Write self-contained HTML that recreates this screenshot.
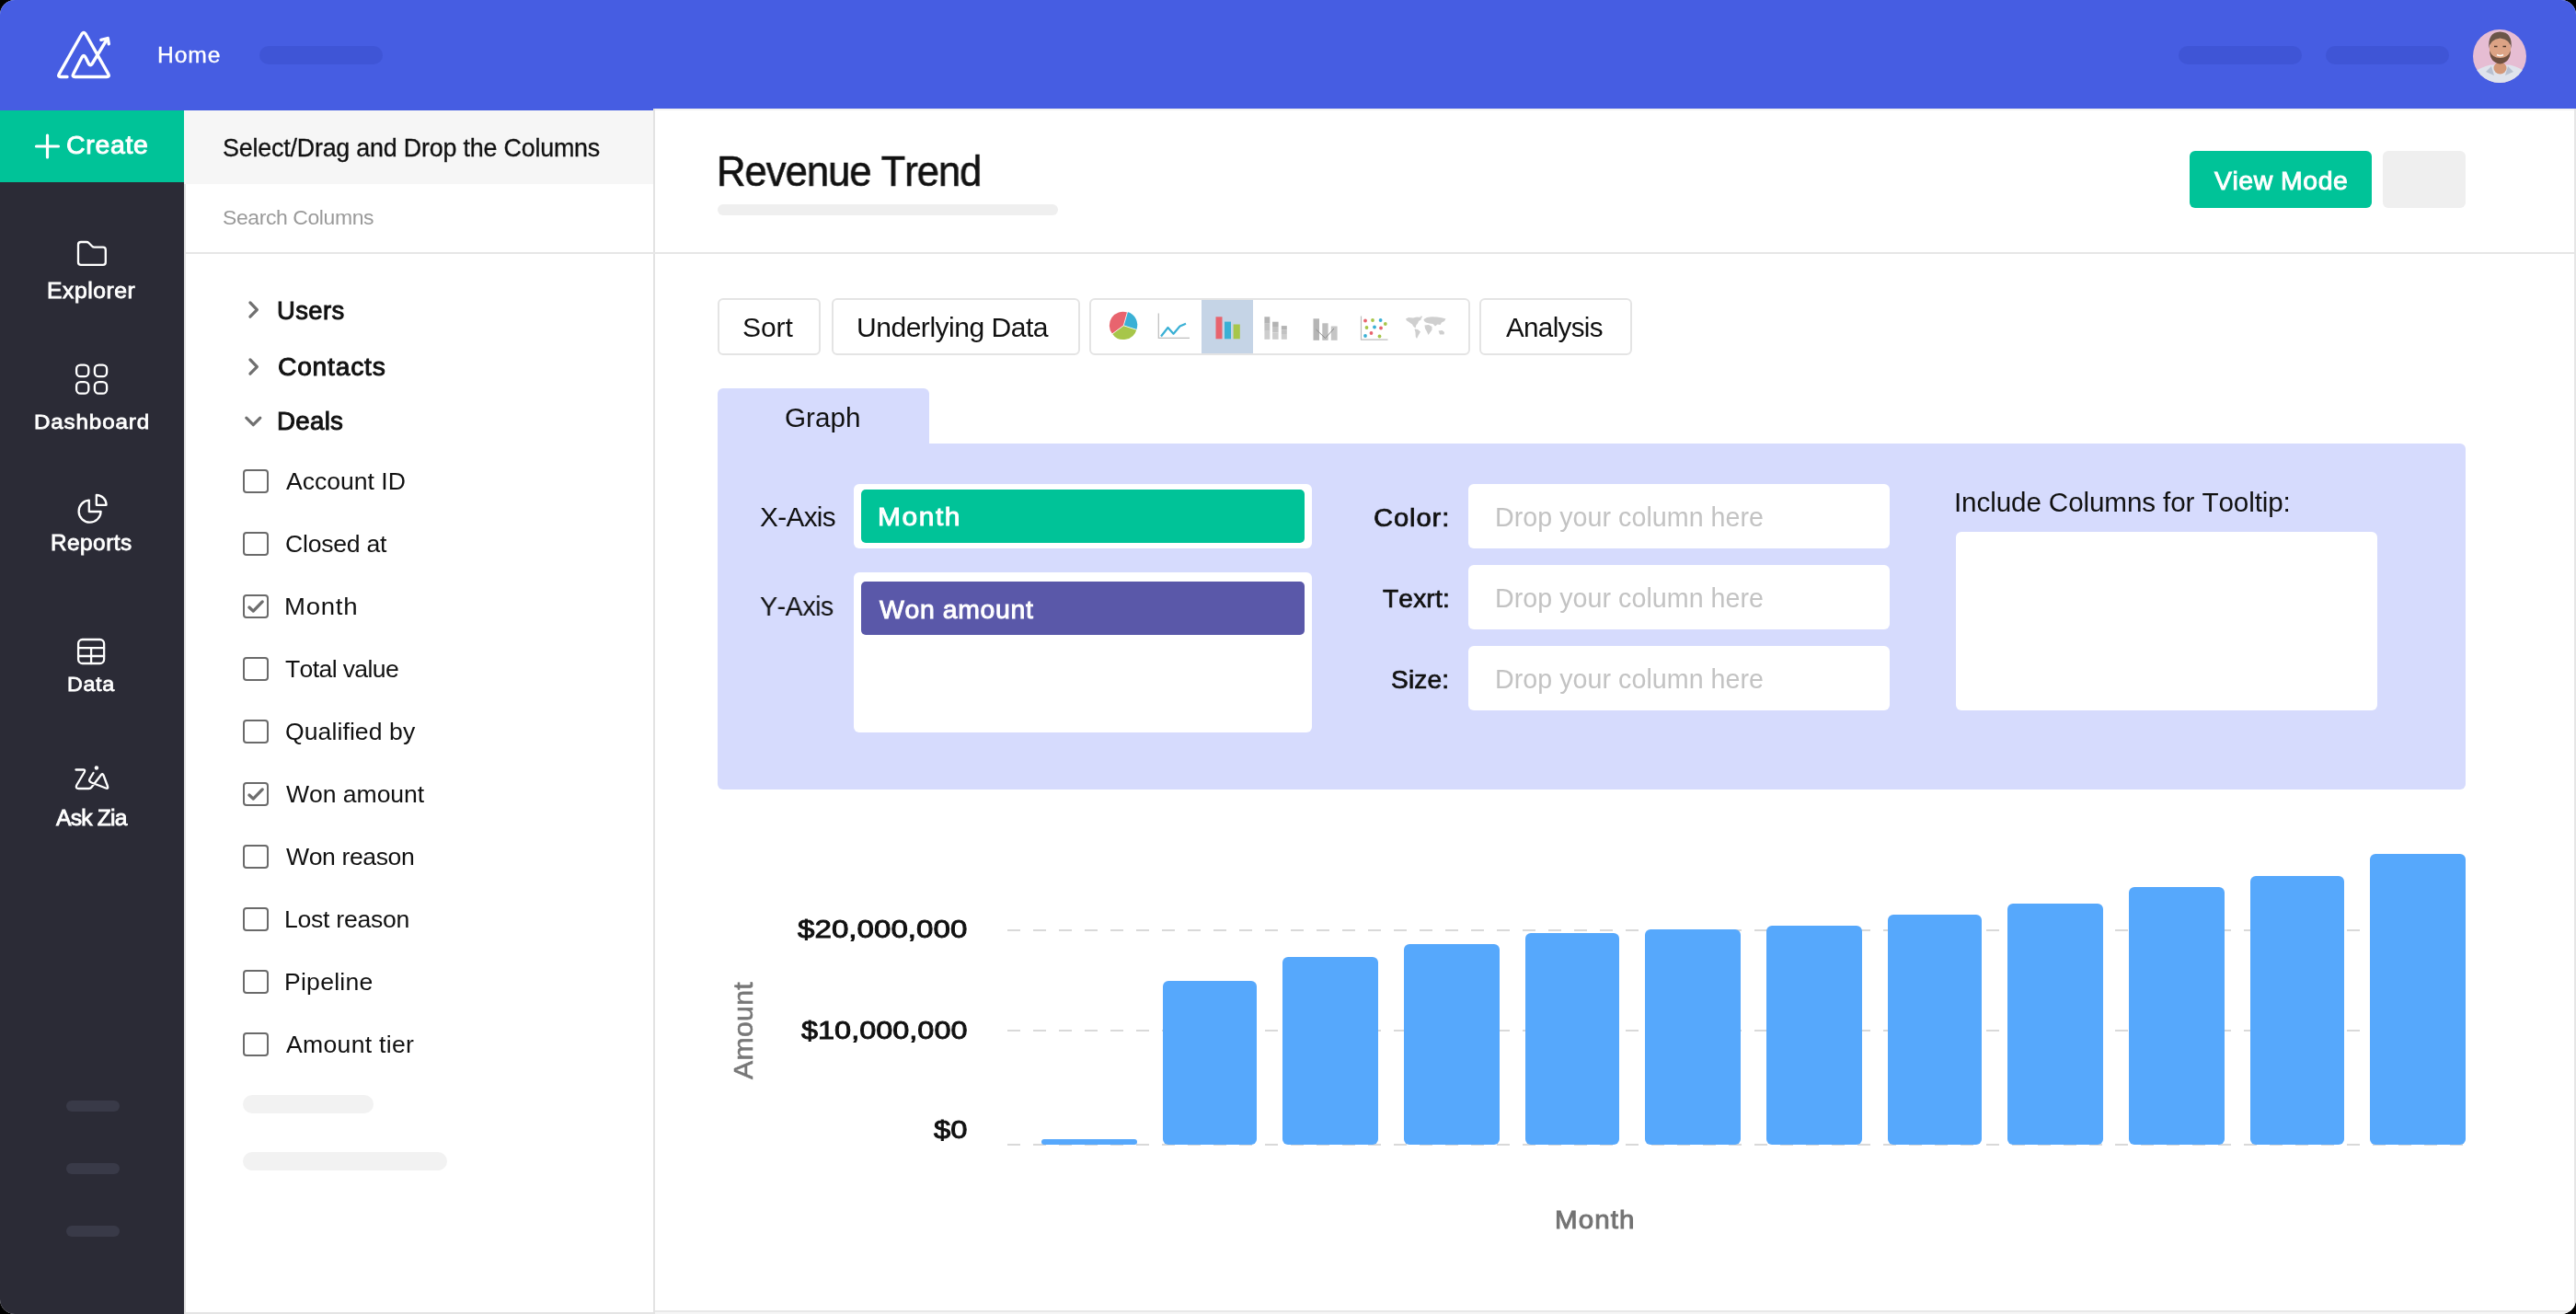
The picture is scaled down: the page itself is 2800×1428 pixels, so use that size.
<!DOCTYPE html>
<html><head><meta charset="utf-8"><title>Revenue Trend</title>
<style>
html,body{margin:0;padding:0;background:#000;}
#app{position:relative;width:2800px;height:1428px;overflow:hidden;border-radius:16px;background:#fff;font-family:"Liberation Sans",sans-serif;}
.r{position:absolute;box-sizing:content-box;}
.t{position:absolute;white-space:nowrap;font-family:"Liberation Sans",sans-serif;font-kerning:none;will-change:transform;}
</style></head><body><div id="app">
<div class="r" style="left:0.0px;top:0.0px;width:2800.0px;height:120.0px;background:#465de2;"></div>
<div class="r" style="left:282.0px;top:50.0px;width:134.0px;height:20.0px;background:#3f55d6;border-radius:10px;"></div>
<div class="r" style="left:2368.0px;top:50.0px;width:134.0px;height:20.0px;background:#3f55d6;border-radius:10px;"></div>
<div class="r" style="left:2528.0px;top:50.0px;width:134.0px;height:20.0px;background:#3f55d6;border-radius:10px;"></div>
<div class="r" style="left:0.0px;top:120.0px;width:200.0px;height:1308.0px;background:#2b2b36;"></div>
<div class="r" style="left:0.0px;top:120.0px;width:200.0px;height:78.0px;background:#00c398;"></div>
<div class="r" style="left:72.0px;top:1196.0px;width:58.0px;height:12.0px;background:#393a48;border-radius:6px;"></div>
<div class="r" style="left:72.0px;top:1264.0px;width:58.0px;height:12.0px;background:#393a48;border-radius:6px;"></div>
<div class="r" style="left:72.0px;top:1332.0px;width:58.0px;height:12.0px;background:#393a48;border-radius:6px;"></div>
<div class="r" style="left:200.0px;top:120.0px;width:512.0px;height:1308.0px;background:#fff;"></div>
<div class="r" style="left:200.0px;top:120.0px;width:510.0px;height:80.0px;background:#f6f6f6;"></div>
<div class="r" style="left:200.0px;top:200.0px;width:2.0px;height:1228.0px;background:#e3e3e3;"></div>
<div class="r" style="left:710.0px;top:118.0px;width:2.0px;height:1310.0px;background:#e3e3e3;"></div>
<div class="r" style="left:712.0px;top:118.0px;width:2086.0px;height:1306.0px;background:#fff;"></div>
<div class="r" style="left:2798.0px;top:118.0px;width:2.0px;height:1310.0px;background:#e6e6e6;"></div>
<div class="r" style="left:712.0px;top:1424.0px;width:2088.0px;height:2.0px;background:#e8e8e8;"></div>
<div class="r" style="left:712.0px;top:1426.0px;width:2088.0px;height:2.0px;background:#f5f5f5;"></div>
<div class="r" style="left:202.0px;top:274.0px;width:2596.0px;height:2.0px;background:#e6e6e6;"></div>
<div class="r" style="left:712.0px;top:118.0px;width:2086.0px;height:2.0px;background:#f2f2f2;"></div>
<div class="r" style="left:202.0px;top:1426.0px;width:508.0px;height:2.0px;background:#e4e4e4;"></div>
<div class="r" style="left:264.0px;top:1190.0px;width:142.0px;height:20.0px;background:#f2f2f2;border-radius:10px;"></div>
<div class="r" style="left:264.0px;top:1252.0px;width:222.0px;height:20.0px;background:#f2f2f2;border-radius:10px;"></div>
<div class="r" style="left:264px;top:510px;width:24px;height:22px;border:2px solid #6a6a6a;border-radius:4px;"></div>
<div class="r" style="left:264px;top:578px;width:24px;height:22px;border:2px solid #6a6a6a;border-radius:4px;"></div>
<div class="r" style="left:264px;top:646px;width:24px;height:22px;border:2px solid #6a6a6a;border-radius:4px;"></div>
<div class="r" style="left:264px;top:714px;width:24px;height:22px;border:2px solid #6a6a6a;border-radius:4px;"></div>
<div class="r" style="left:264px;top:782px;width:24px;height:22px;border:2px solid #6a6a6a;border-radius:4px;"></div>
<div class="r" style="left:264px;top:850px;width:24px;height:22px;border:2px solid #6a6a6a;border-radius:4px;"></div>
<div class="r" style="left:264px;top:918px;width:24px;height:22px;border:2px solid #6a6a6a;border-radius:4px;"></div>
<div class="r" style="left:264px;top:986px;width:24px;height:22px;border:2px solid #6a6a6a;border-radius:4px;"></div>
<div class="r" style="left:264px;top:1054px;width:24px;height:22px;border:2px solid #6a6a6a;border-radius:4px;"></div>
<div class="r" style="left:264px;top:1122px;width:24px;height:22px;border:2px solid #6a6a6a;border-radius:4px;"></div>
<div class="r" style="left:780.0px;top:222.0px;width:370.0px;height:12.0px;background:#efefef;border-radius:6px;"></div>
<div class="r" style="left:2380.0px;top:164.0px;width:198.0px;height:62.0px;background:#00c398;border-radius:6px;"></div>
<div class="r" style="left:2590.0px;top:164.0px;width:90.0px;height:62.0px;background:#efefef;border-radius:6px;"></div>
<div class="r" style="left:780.0px;top:324.0px;width:112.0px;height:62.0px;border:2px solid #e4e4e4;border-radius:6px;box-sizing:border-box;background:#fff"></div>
<div class="r" style="left:904.0px;top:324.0px;width:270.0px;height:62.0px;border:2px solid #e4e4e4;border-radius:6px;box-sizing:border-box;background:#fff"></div>
<div class="r" style="left:1184.0px;top:324.0px;width:414.0px;height:62.0px;border:2px solid #e4e4e4;border-radius:6px;box-sizing:border-box;background:#fff"></div>
<div class="r" style="left:1608.0px;top:324.0px;width:166.0px;height:62.0px;border:2px solid #e4e4e4;border-radius:6px;box-sizing:border-box;background:#fff"></div>
<div class="r" style="left:1306.0px;top:326.0px;width:56.0px;height:58.0px;background:#c5d4e6;"></div>
<div class="r" style="left:780.0px;top:422.0px;width:230.0px;height:62.0px;background:#d6dbfd;border-radius:6px 6px 0 0;"></div>
<div class="r" style="left:780.0px;top:482.0px;width:1900.0px;height:376.0px;background:#d6dbfd;border-radius:0 6px 6px 6px;"></div>
<div class="r" style="left:928.0px;top:526.0px;width:498.0px;height:70.0px;background:#fff;border-radius:6px;"></div>
<div class="r" style="left:936.0px;top:532.0px;width:482.0px;height:58.0px;background:#00c398;border-radius:5px;"></div>
<div class="r" style="left:928.0px;top:622.0px;width:498.0px;height:174.0px;background:#fff;border-radius:6px;"></div>
<div class="r" style="left:936.0px;top:632.0px;width:482.0px;height:58.0px;background:#5a58a9;border-radius:5px;"></div>
<div class="r" style="left:1596.0px;top:526.0px;width:458.0px;height:70.0px;background:#fff;border-radius:6px;"></div>
<div class="r" style="left:1596.0px;top:614.0px;width:458.0px;height:70.0px;background:#fff;border-radius:6px;"></div>
<div class="r" style="left:1596.0px;top:702.0px;width:458.0px;height:70.0px;background:#fff;border-radius:6px;"></div>
<div class="r" style="left:2126.0px;top:578.0px;width:458.0px;height:194.0px;background:#fff;border-radius:6px;"></div>
<div class="r" style="left:1095px;top:1010px;width:1585px;height:2px;background:repeating-linear-gradient(90deg,#d9d9d9 0 14px,transparent 14px 28px);"></div>
<div class="r" style="left:1095px;top:1119px;width:1585px;height:2px;background:repeating-linear-gradient(90deg,#d9d9d9 0 14px,transparent 14px 28px);"></div>
<div class="r" style="left:1095px;top:1243px;width:1585px;height:2px;background:repeating-linear-gradient(90deg,#d9d9d9 0 14px,transparent 14px 28px);"></div>
<div class="r" style="left:1132.0px;top:1238.0px;width:104.0px;height:6.0px;background:#56a8fc;border-radius:3px;"></div>
<div class="r" style="left:1264.0px;top:1066.0px;width:102.0px;height:178.0px;background:#56a8fc;border-radius:6px;"></div>
<div class="r" style="left:1394.0px;top:1040.0px;width:104.0px;height:204.0px;background:#56a8fc;border-radius:6px;"></div>
<div class="r" style="left:1526.0px;top:1026.0px;width:104.0px;height:218.0px;background:#56a8fc;border-radius:6px;"></div>
<div class="r" style="left:1658.0px;top:1014.0px;width:102.0px;height:230.0px;background:#56a8fc;border-radius:6px;"></div>
<div class="r" style="left:1788.0px;top:1010.0px;width:104.0px;height:234.0px;background:#56a8fc;border-radius:6px;"></div>
<div class="r" style="left:1920.0px;top:1006.0px;width:104.0px;height:238.0px;background:#56a8fc;border-radius:6px;"></div>
<div class="r" style="left:2052.0px;top:994.0px;width:102.0px;height:250.0px;background:#56a8fc;border-radius:6px;"></div>
<div class="r" style="left:2182.0px;top:982.0px;width:104.0px;height:262.0px;background:#56a8fc;border-radius:6px;"></div>
<div class="r" style="left:2314.0px;top:964.0px;width:104.0px;height:280.0px;background:#56a8fc;border-radius:6px;"></div>
<div class="r" style="left:2446.0px;top:952.0px;width:102.0px;height:292.0px;background:#56a8fc;border-radius:6px;"></div>
<div class="r" style="left:2576.0px;top:928.0px;width:104.0px;height:316.0px;background:#56a8fc;border-radius:6px;"></div>
<svg class="r" style="left:0;top:0" width="2800" height="1428" viewBox="0 0 2800 1428"><path d="M73 83.5H66Q62.5 83.5 64.3 80.3L88.3 38Q91 32.8 93.7 38L117.7 80.3Q119.5 83.5 116 83.5H81.5Q78 83.5 79.8 80.3L88.9 62.5Q91 58.4 93.1 62.5L96.5 69.5Q98.3 72.2 100 69.5L116.5 42.3" fill="none" stroke="#fff" stroke-width="3.4" stroke-linecap="round" stroke-linejoin="round"/><path d="M109.8 43.3L117.2 41.6L118.3 47.9" fill="none" stroke="#fff" stroke-width="3.4" stroke-linecap="round" stroke-linejoin="round"/><path d="M39.5 159H63.5M51.5 147V171" stroke="#fff" stroke-width="3.2" stroke-linecap="round"/><path d="M85 266Q85 263 88 263H94Q95.5 263 96.5 264L100 267.5Q101 268.7 102.5 268.7H112Q114.8 268.7 114.8 271.5V285Q114.8 287.8 112 287.8H88Q85 287.8 85 285Z" fill="none" stroke="#fff" stroke-width="2.3" stroke-linecap="round" stroke-linejoin="round"/><rect x="83.1" y="396.6" width="13.2" height="12.6" rx="4.5" fill="none" stroke="#fff" stroke-width="2.3" stroke-linecap="round" stroke-linejoin="round"/><rect x="83.1" y="415.1" width="13.2" height="12.6" rx="4.5" fill="none" stroke="#fff" stroke-width="2.3" stroke-linecap="round" stroke-linejoin="round"/><rect x="102.9" y="396.6" width="13.2" height="12.6" rx="4.5" fill="none" stroke="#fff" stroke-width="2.3" stroke-linecap="round" stroke-linejoin="round"/><rect x="102.9" y="415.1" width="13.2" height="12.6" rx="4.5" fill="none" stroke="#fff" stroke-width="2.3" stroke-linecap="round" stroke-linejoin="round"/><path d="M96.8 543.7A12 12 0 1 0 109.6 556H96.8Z" fill="none" stroke="#fff" stroke-width="2.3" stroke-linecap="round" stroke-linejoin="round"/><path d="M104.8 548.8V538A10.8 10.8 0 0 1 115.6 548.8Z" fill="none" stroke="#fff" stroke-width="2.3" stroke-linecap="round" stroke-linejoin="round"/><rect x="85.1" y="695" width="28" height="26" rx="4.5" fill="none" stroke="#fff" stroke-width="2.3" stroke-linecap="round" stroke-linejoin="round"/><path d="M85.1 704.2H113.1M85.1 713H113.1M99.1 704.2V721" fill="none" stroke="#fff" stroke-width="2.3" stroke-linecap="round" stroke-linejoin="round"/><path d="M82.5 836.5H90.5Q93 836.5 91.8 839L83.2 853.5Q81.8 857 85.5 857H96.5Q98.5 857 99.5 855.5L110 842Q111.5 840 112.5 842.5L117 854.5Q118 857.5 115 856.5L99.5 850.5Q96 849 97.5 846.5L101.5 840" fill="none" stroke="#fff" stroke-width="2.3" stroke-linecap="round" stroke-linejoin="round"/><circle cx="104.9" cy="834.5" r="2.2" fill="#fff"/><path d="M271.9 328.9L279.4 336.6L271.9 344.2" fill="none" stroke="#707070" stroke-width="3.2" stroke-linecap="round" stroke-linejoin="round"/><path d="M271.9 390.9L279.4 398.6L271.9 406.2" fill="none" stroke="#707070" stroke-width="3.2" stroke-linecap="round" stroke-linejoin="round"/><path d="M267.8 454.2L275.3 461.7L282.8 454.2" fill="none" stroke="#707070" stroke-width="3.2" stroke-linecap="round" stroke-linejoin="round"/><path d="M270.9 660.0L275.3 664.1L285.2 653.9" fill="none" stroke="#6e6e6e" stroke-width="3.3" stroke-linecap="round" stroke-linejoin="round"/><path d="M270.9 864.0L275.3 868.1L285.2 857.9" fill="none" stroke="#6e6e6e" stroke-width="3.3" stroke-linecap="round" stroke-linejoin="round"/><path d="M1221.3 353.8L1225.5 339A14.8 14.8 0 0 1 1235.4 358.3Z" fill="#3ab0d5"/><path d="M1221.3 353.8L1235.4 358.3A14.8 14.8 0 0 1 1209 362.7Z" fill="#a7c64a"/><path d="M1221.3 353.8L1209 362.7A14.8 14.8 0 0 1 1225.3 339.5Z" fill="#e8646e"/><path d="M1221.3 353.8L1225.5 339M1221.3 353.8L1235.8 358.5M1221.3 353.8L1208.8 363" stroke="#fff" stroke-width="0.8"/><path d="M1259.3 340.5V367.3H1293" fill="none" stroke="#bdbdbd" stroke-width="1.2"/><path d="M1262 365.5L1269.5 356L1275.5 362.8L1282.5 354.5L1289 351.8" fill="none" stroke="#3ab0d5" stroke-width="2.2" stroke-linejoin="round"/><rect x="1321.5" y="344.3" width="7" height="24" fill="#e8646e"/><rect x="1331" y="349.6" width="7" height="18.7" fill="#3ab0d5"/><rect x="1340.6" y="352.5" width="7.2" height="15.8" fill="#a7c64a"/><rect x="1374.4" y="344.3" width="5.9" height="7.4" fill="#b3b3b3"/><rect x="1374.4" y="351.7" width="5.9" height="8.1" fill="#c2c2c2"/><rect x="1374.4" y="359.8" width="5.9" height="9.0" fill="#cdcdcd"/><rect x="1383.1" y="349.7" width="6.5" height="5.3" fill="#b3b3b3"/><rect x="1383.1" y="355.0" width="6.5" height="6.5" fill="#c2c2c2"/><rect x="1383.1" y="361.5" width="6.5" height="7.3" fill="#cdcdcd"/><rect x="1392.8" y="354.1" width="6.0" height="4.1" fill="#b3b3b3"/><rect x="1392.8" y="358.2" width="6.0" height="4.8" fill="#c2c2c2"/><rect x="1392.8" y="363.0" width="6.0" height="5.8" fill="#cdcdcd"/><rect x="1427.5" y="346.3" width="6.5" height="23.5" fill="#b5b5b5"/><rect x="1437.3" y="351.3" width="6.3" height="18.5" fill="#bdbdbd"/><rect x="1446.8" y="354.5" width="6.8" height="15.3" fill="#c5c5c5"/><path d="M1430.5 358L1440.5 367.5L1450 357" fill="none" stroke="#8a8a8a" stroke-width="1"/><path d="M1479.5 343.5V369.2H1508.5" fill="none" stroke="#bdbdbd" stroke-width="1.2"/><circle cx="1484.0" cy="348.5" r="1.9" fill="#e8646e"/><circle cx="1492.0" cy="348.0" r="1.9" fill="#a7c64a"/><circle cx="1500.6" cy="348.0" r="1.9" fill="#3ab0d5"/><circle cx="1505.8" cy="352.0" r="1.9" fill="#a7c64a"/><circle cx="1485.5" cy="356.0" r="1.9" fill="#a7c64a"/><circle cx="1494.0" cy="355.5" r="1.9" fill="#3ab0d5"/><circle cx="1501.0" cy="356.5" r="1.9" fill="#e8646e"/><circle cx="1490.5" cy="362.0" r="1.9" fill="#e8646e"/><circle cx="1484.0" cy="365.0" r="1.9" fill="#3ab0d5"/><circle cx="1499.5" cy="365.5" r="1.9" fill="#a7c64a"/><g fill="#cfcfcf"><path d="M1528 346.5L1531 345L1536 345.5L1540 344.5L1545 345L1544.5 347.5L1542 349L1541 351.5L1539.5 353L1538.5 356.5L1536.5 355L1535 352.5L1531.5 350L1529 348.5Z"/><path d="M1537.5 357.5L1541 358L1544 360.5L1542 364L1540 368L1538.8 366L1538.5 361Z"/><path d="M1547.5 347L1551 345L1556 344.3L1562 344.5L1568 345.5L1571.5 346.5L1570 349L1567 350.5L1565.5 353L1562.5 352.5L1560 354.5L1557.5 352L1553.5 351.5L1550 350.5L1548 349Z"/><path d="M1548.5 353.5L1553 353L1556.5 355L1556.5 358.5L1554 362L1552.5 364L1551 360.5L1549 357Z"/><path d="M1563.5 359.5L1567.5 359L1570 361L1569.5 363.5L1565 363.5Z"/><path d="M1543 344L1546 343.5L1545.5 345.5Z"/></g></svg>
<svg class="r" style="left:2688px;top:32px" width="58" height="58" viewBox="0 0 58 58"><defs><clipPath id="ac"><circle cx="29" cy="29" r="29"/></clipPath></defs><g clip-path="url(#ac)"><rect width="58" height="58" fill="#e6bdd3"/><path d="M0 58V47Q8 41 19 38.5L40 38.5Q51 41 58 47V58Z" fill="#dfe3ec"/><path d="M14 46L20 40L23 50Z M44 46L38 40L35 50Z" fill="#b8c0d0"/><ellipse cx="29.5" cy="42" rx="7" ry="6.5" fill="#d39878"/><ellipse cx="29.5" cy="21.5" rx="11.5" ry="14" fill="#dca385"/><path d="M18 23Q18.5 36 29.5 37.5Q40.5 36 41 23Q38 31 29.5 31Q21 31 18 23Z" fill="#6e5040"/><path d="M17.5 21Q15.5 3 29.5 2.5Q43.5 3 41.5 21Q41 11 29.5 9.5Q18 11 17.5 21Z" fill="#6b5648"/><path d="M23 18.5H26.5M32.5 18.5H36" stroke="#4a3428" stroke-width="1.3"/><path d="M26 27.5Q29.5 29.5 33 27.5" stroke="#fff" stroke-width="1.6" fill="none"/></g></svg>
<div id="home" class="t" style="left:171.15px;top:45px;font-size:24.637px;line-height:30px;letter-spacing:0.882px;font-weight:400;color:#fff;-webkit-text-stroke:0.35px #fff;">Home</div>
<div id="create" class="t" style="left:72.01px;top:141px;font-size:27.296px;line-height:33px;letter-spacing:0.675px;font-weight:400;color:#fff;transform-origin:0 0;transform:scaleX(1.0426);-webkit-text-stroke:0.92px #fff;">Create</div>
<div id="explorer" class="t" style="left:51.37px;top:302px;font-size:23.555px;line-height:28px;letter-spacing:0.559px;font-weight:400;color:#fff;transform-origin:0 0;transform:scaleX(1.0458);-webkit-text-stroke:0.79px #fff;">Explorer</div>
<div id="dashboard" class="t" style="left:37.40px;top:445px;font-size:22.862px;line-height:27px;letter-spacing:0.796px;font-weight:400;color:#fff;transform-origin:0 0;transform:scaleX(1.0587);-webkit-text-stroke:0.77px #fff;">Dashboard</div>
<div id="reports" class="t" style="left:55.40px;top:576px;font-size:23.416px;line-height:28px;letter-spacing:0.499px;font-weight:400;color:#fff;transform-origin:0 0;transform:scaleX(1.0378);-webkit-text-stroke:0.79px #fff;">Reports</div>
<div id="data" class="t" style="left:73.46px;top:730px;font-size:22.446px;line-height:27px;letter-spacing:0.611px;font-weight:400;color:#fff;transform-origin:0 0;transform:scaleX(1.0402);-webkit-text-stroke:0.76px #fff;">Data</div>
<div id="askzia" class="t" style="left:61.07px;top:874px;font-size:24.663px;line-height:30px;letter-spacing:-0.785px;font-weight:400;color:#fff;-webkit-text-stroke:0.83px #fff;">Ask Zia</div>
<div id="sel" class="t" style="left:241.73px;top:145px;font-size:26.890px;line-height:32px;letter-spacing:-0.210px;font-weight:400;color:#111;-webkit-text-stroke:0.30px #111;">Select/Drag and Drop the Columns</div>
<div id="search" class="t" style="left:241.76px;top:222px;font-size:22.965px;line-height:28px;letter-spacing:-0.399px;font-weight:400;color:#9a9a9a;">Search Columns</div>
<div id="users" class="t" style="left:301.35px;top:321px;font-size:27.435px;line-height:33px;letter-spacing:0.384px;font-weight:400;color:#111;-webkit-text-stroke:0.93px #111;">Users</div>
<div id="contacts" class="t" style="left:301.82px;top:383px;font-size:26.880px;line-height:32px;letter-spacing:0.739px;font-weight:400;color:#111;transform-origin:0 0;transform:scaleX(1.0499);-webkit-text-stroke:0.91px #111;">Contacts</div>
<div id="deals" class="t" style="left:300.99px;top:441px;font-size:27.712px;line-height:33px;letter-spacing:0.274px;font-weight:400;color:#111;-webkit-text-stroke:0.93px #111;">Deals</div>
<div id="item0" class="t" style="left:310.95px;top:507px;font-size:26.599px;line-height:32px;letter-spacing:-0.008px;font-weight:400;color:#111;">Account ID</div>
<div id="item1" class="t" style="left:309.65px;top:575px;font-size:26.599px;line-height:32px;letter-spacing:-0.228px;font-weight:400;color:#111;">Closed at</div>
<div id="item2" class="t" style="left:308.73px;top:643px;font-size:26.599px;line-height:32px;letter-spacing:0.673px;font-weight:400;color:#111;transform-origin:0 0;transform:scaleX(1.0384);">Month</div>
<div id="item3" class="t" style="left:310.40px;top:711px;font-size:26.599px;line-height:32px;letter-spacing:-0.633px;font-weight:400;color:#111;">Total value</div>
<div id="item4" class="t" style="left:309.74px;top:779px;font-size:26.599px;line-height:32px;letter-spacing:0.077px;font-weight:400;color:#111;">Qualified by</div>
<div id="item5" class="t" style="left:310.88px;top:847px;font-size:26.599px;line-height:32px;letter-spacing:-0.054px;font-weight:400;color:#111;">Won amount</div>
<div id="item6" class="t" style="left:310.88px;top:915px;font-size:26.599px;line-height:32px;letter-spacing:-0.396px;font-weight:400;color:#111;">Won reason</div>
<div id="item7" class="t" style="left:308.82px;top:983px;font-size:26.599px;line-height:32px;letter-spacing:-0.259px;font-weight:400;color:#111;">Lost reason</div>
<div id="item8" class="t" style="left:308.82px;top:1051px;font-size:26.599px;line-height:32px;letter-spacing:0.246px;font-weight:400;color:#111;">Pipeline</div>
<div id="item9" class="t" style="left:310.95px;top:1119px;font-size:26.599px;line-height:32px;letter-spacing:0.299px;font-weight:400;color:#111;">Amount tier</div>
<div id="title" class="t" style="left:778.92px;top:159px;font-size:45.494px;line-height:55px;letter-spacing:-1.055px;font-weight:400;color:#111;transform-origin:0 0;transform:scaleX(0.9587);-webkit-text-stroke:0.60px #111;">Revenue Trend</div>
<div id="viewmode" class="t" style="left:2406.96px;top:179px;font-size:28.404px;line-height:34px;letter-spacing:0.540px;font-weight:400;color:#fff;-webkit-text-stroke:0.96px #fff;">View Mode</div>
<div id="sort" class="t" style="left:807.43px;top:338px;font-size:30.087px;line-height:36px;letter-spacing:-0.131px;font-weight:400;color:#111;">Sort</div>
<div id="udata" class="t" style="left:930.68px;top:338px;font-size:30.087px;line-height:36px;letter-spacing:-0.508px;font-weight:400;color:#111;">Underlying Data</div>
<div id="analysis" class="t" style="left:1636.84px;top:338px;font-size:29.651px;line-height:36px;letter-spacing:-0.697px;font-weight:400;color:#111;">Analysis</div>
<div id="graph" class="t" style="left:853.31px;top:436px;font-size:29.651px;line-height:36px;letter-spacing:0.027px;font-weight:400;color:#111;">Graph</div>
<div id="xaxis" class="t" style="left:825.83px;top:544px;font-size:29.797px;line-height:36px;letter-spacing:-0.668px;font-weight:400;color:#111;">X-Axis</div>
<div id="yaxis" class="t" style="left:825.87px;top:641px;font-size:29.797px;line-height:36px;letter-spacing:-0.586px;font-weight:400;color:#111;transform-origin:0 0;transform:scaleX(0.9653);">Y-Axis</div>
<div id="monthbar" class="t" style="left:954.01px;top:545px;font-size:27.712px;line-height:33px;letter-spacing:1.453px;font-weight:400;color:#fff;transform-origin:0 0;transform:scaleX(1.0797);-webkit-text-stroke:0.93px #fff;">Month</div>
<div id="wonbar" class="t" style="left:956.36px;top:645px;font-size:28.404px;line-height:34px;letter-spacing:0.649px;font-weight:400;color:#fff;-webkit-text-stroke:0.96px #fff;">Won amount</div>
<div id="color" class="t" style="left:1493.47px;top:546px;font-size:27.616px;line-height:33px;letter-spacing:0.816px;font-weight:400;color:#111;transform-origin:0 0;transform:scaleX(1.0585);-webkit-text-stroke:0.70px #111;">Color:</div>
<div id="texrt" class="t" style="left:1502.52px;top:634px;font-size:28.052px;line-height:34px;letter-spacing:0.200px;font-weight:400;color:#111;-webkit-text-stroke:0.70px #111;">Texrt:</div>
<div id="size" class="t" style="left:1512.08px;top:722px;font-size:28.052px;line-height:34px;letter-spacing:0.193px;font-weight:400;color:#111;-webkit-text-stroke:0.70px #111;">Size:</div>
<div id="drop0" class="t" style="left:1625.15px;top:545px;font-size:28.634px;line-height:34px;letter-spacing:0.044px;font-weight:400;color:#c3c3c3;">Drop your column here</div>
<div id="drop1" class="t" style="left:1625.15px;top:633px;font-size:28.634px;line-height:34px;letter-spacing:0.044px;font-weight:400;color:#c3c3c3;">Drop your column here</div>
<div id="drop2" class="t" style="left:1625.15px;top:721px;font-size:28.634px;line-height:34px;letter-spacing:0.044px;font-weight:400;color:#c3c3c3;">Drop your column here</div>
<div id="tooltip" class="t" style="left:2124.26px;top:528px;font-size:29.651px;line-height:36px;letter-spacing:-0.119px;font-weight:400;color:#111;">Include Columns for Tooltip:</div>
<div id="y20" class="t" style="left:867.11px;top:993px;font-size:27.850px;line-height:33px;letter-spacing:0.000px;font-weight:400;color:#111;transform-origin:0 0;transform:scaleX(1.1907);-webkit-text-stroke:0.94px #111;">$20,000,000</div>
<div id="y10" class="t" style="left:870.72px;top:1103px;font-size:27.712px;line-height:33px;letter-spacing:0.000px;font-weight:400;color:#111;transform-origin:0 0;transform:scaleX(1.1718);-webkit-text-stroke:0.93px #111;">$10,000,000</div>
<div id="y0" class="t" style="left:1015.01px;top:1211px;font-size:27.573px;line-height:33px;letter-spacing:0.000px;font-weight:400;color:#111;transform-origin:0 0;transform:scaleX(1.1903);-webkit-text-stroke:0.93px #111;">$0</div>
<div id="monthx" class="t" style="left:1689.94px;top:1309px;font-size:27.989px;line-height:34px;letter-spacing:1.035px;font-weight:400;color:#737373;transform-origin:0 0;transform:scaleX(1.0562);-webkit-text-stroke:0.94px #737373;">Month</div><div class="t" style="left:790.18px;top:1172.96px;font-size:30.23px;line-height:36.28px;letter-spacing:0.318px;font-weight:400;color:#777;-webkit-text-stroke:0.6px #777;transform-origin:0 0;transform:rotate(-90deg)">Amount</div>
</div></body></html>
